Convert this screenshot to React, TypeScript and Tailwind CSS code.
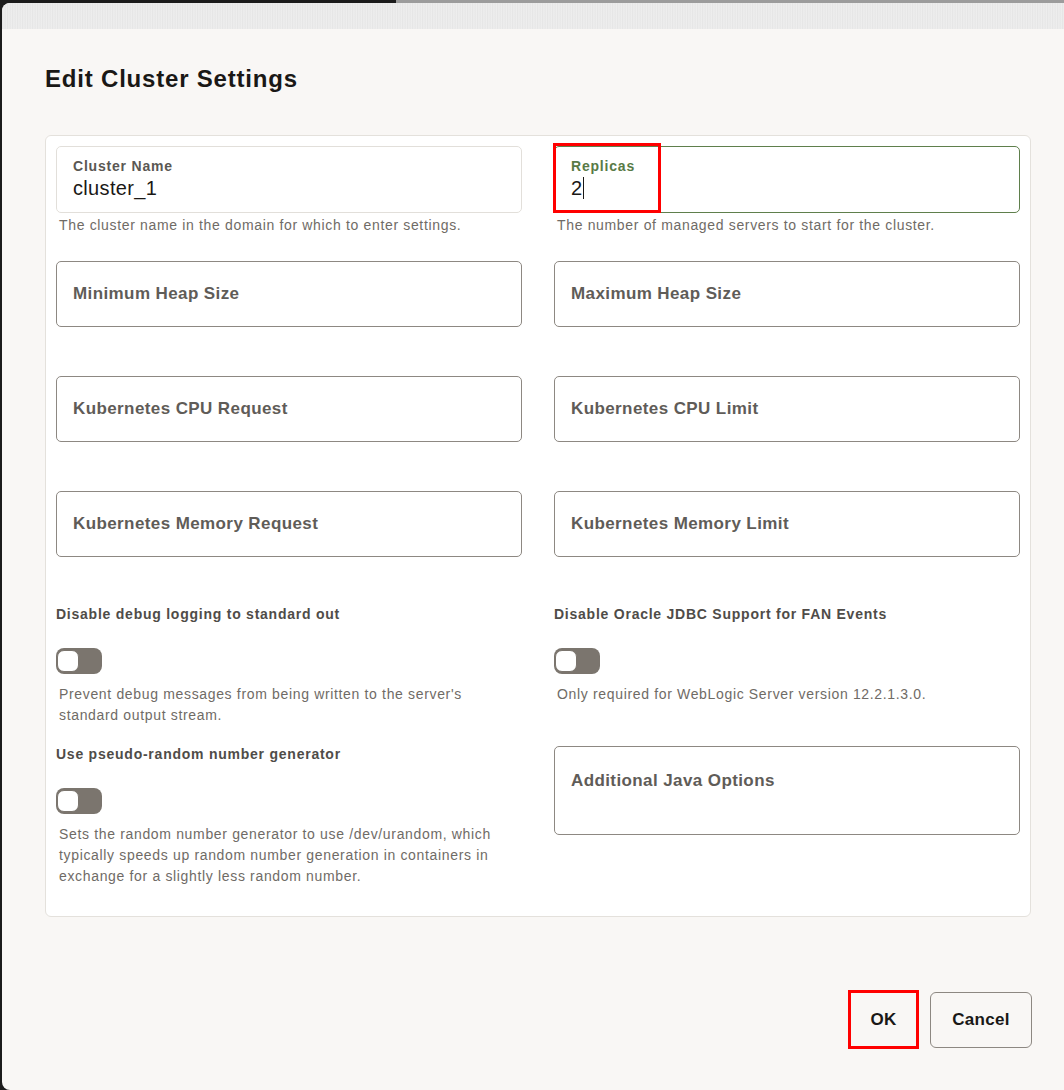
import React from "react";

const font = { fontFamily: '"Liberation Sans", Arial, sans-serif' };

function Field({ label }: { label: string }) {
  return (
    <div className="flex h-[66px] items-center rounded-[5px] border border-[#8d8882] bg-white px-4">
      <span className="text-[17px] font-bold tracking-[0.4px] text-[#5f5c58]">{label}</span>
    </div>
  );
}

function Toggle() {
  return (
    <div className="flex h-[26px] w-[46px] items-center rounded-[8px] bg-[#7b756e] px-[1px]">
      <div className="h-[22px] w-[22px] rounded-[7px] border-[1.5px] border-[#7b756e] bg-white" />
    </div>
  );
}

function Help({ children }: { children: React.ReactNode }) {
  return (
    <p className="pl-[3px] text-[14px] leading-[21px] tracking-[0.66px] text-[#6f6b66]">{children}</p>
  );
}

function SwitchLabel({ children }: { children: React.ReactNode }) {
  return (
    <div className="text-[14px] font-bold leading-[20px] tracking-[0.76px] text-[#4f4c48]">{children}</div>
  );
}

export default function App() {
  return (
    <div className="flex h-[1090px] w-[1064px] flex-col overflow-hidden bg-[#1c1c1c]" style={font}>
      <div className="flex h-[3px] shrink-0">
        <div className="w-[396px]" />
        <div className="flex-1 bg-[#9c9c9c]" />
      </div>
      <div className="ml-[2px] flex flex-1 flex-col overflow-hidden rounded-l-[8px] bg-[#f9f7f5]">
        <div className="h-[26px] shrink-0 bg-[repeating-linear-gradient(90deg,#e3e3e3_0px,#efefef_2px,#e6e6e6_3px,#f0f0f0_5px)]" />

        <div className="flex flex-1 flex-col pl-[43px] pr-[33px]">
          <h1 className="pt-[36px] text-[24px] font-bold leading-[28px] tracking-[0.8px] text-[#1a1816]">
            Edit Cluster Settings
          </h1>

          <div className="mt-[42px] grid grid-cols-2 gap-x-[32px] rounded-[6px] border border-[#e4e1dc] bg-white p-[10px]">
            {/* left column */}
            <div className="flex flex-col">
              <div className="flex h-[67px] flex-col rounded-[5px] border border-[#e2dfda] bg-white px-4 pt-[11px]">
                <span className="text-[14px] font-bold leading-[17px] tracking-[0.8px] text-[#5a5753]">
                  Cluster Name
                </span>
                <span className="mt-[1px] text-[20px] leading-[24px] tracking-[0.33px] text-[#1a1816]">
                  cluster_1
                </span>
              </div>
              <div className="mt-[2px] mb-[25px]">
                <Help>The cluster name in the domain for which to enter settings.</Help>
              </div>
              <Field label="Minimum Heap Size" />
              <div className="h-[49px]" />
              <Field label="Kubernetes CPU Request" />
              <div className="h-[49px]" />
              <Field label="Kubernetes Memory Request" />

              <div className="mt-[47px]">
                <SwitchLabel>Disable debug logging to standard out</SwitchLabel>
              </div>
              <div className="mt-[24px]">
                <Toggle />
              </div>
              <div className="mt-[10px]">
                <Help>
                  Prevent debug messages from being written to the server's
                  <br />
                  standard output stream.
                </Help>
              </div>

              <div className="mt-[18px]">
                <SwitchLabel>Use pseudo-random number generator</SwitchLabel>
              </div>
              <div className="mt-[24px]">
                <Toggle />
              </div>
              <div className="mt-[10px] mb-[19px]">
                <Help>
                  Sets the random number generator to use /dev/urandom, which
                  <br />
                  typically speeds up random number generation in containers in
                  <br />
                  exchange for a slightly less random number.
                </Help>
              </div>
            </div>

            {/* right column */}
            <div className="flex flex-col">
              <div className="relative flex h-[67px] flex-col rounded-[5px] border border-[#5f7f4c] bg-white px-4 pt-[11px]">
                <span className="text-[14px] font-bold leading-[17px] tracking-[0.8px] text-[#587a46]">
                  Replicas
                </span>
                <span className="mt-[1px] flex items-center text-[20px] leading-[24px] text-[#1a1816]">
                  2<span className="ml-[1px] inline-block h-[22px] w-px bg-[#1a1816]" />
                </span>
                <div className="absolute left-[-2px] top-[-4px] h-[70px] w-[108px] border-[3px] border-[#ff0000]" />
              </div>
              <div className="mt-[2px] mb-[25px]">
                <Help>The number of managed servers to start for the cluster.</Help>
              </div>
              <Field label="Maximum Heap Size" />
              <div className="h-[49px]" />
              <Field label="Kubernetes CPU Limit" />
              <div className="h-[49px]" />
              <Field label="Kubernetes Memory Limit" />

              <div className="mt-[47px]">
                <SwitchLabel>Disable Oracle JDBC Support for FAN Events</SwitchLabel>
              </div>
              <div className="mt-[24px]">
                <Toggle />
              </div>
              <div className="mt-[10px]">
                <Help>Only required for WebLogic Server version 12.2.1.3.0.</Help>
              </div>

              <div className="mt-[41px] h-[89px] rounded-[5px] border border-[#8d8882] bg-white px-4 pt-[22px]">
                <span className="text-[17px] font-bold leading-[20px] tracking-[0.4px] text-[#5f5c58]">
                  Additional Java Options
                </span>
              </div>
            </div>
          </div>

          <div className="-mr-px mt-[73px] flex items-center justify-end gap-[11px]">
            <button className="flex h-[59px] w-[71px] items-center justify-center border-[3px] border-[#ff0000] text-[17px] font-bold tracking-[0.3px] text-[#1a1816]">
              OK
            </button>
            <button className="flex h-[56px] w-[102px] items-center justify-center rounded-[6px] border border-[#8d8882] bg-[#f9f7f5] text-[17px] font-bold tracking-[0.3px] text-[#1a1816]">
              Cancel
            </button>
          </div>
        </div>
      </div>
    </div>
  );
}
